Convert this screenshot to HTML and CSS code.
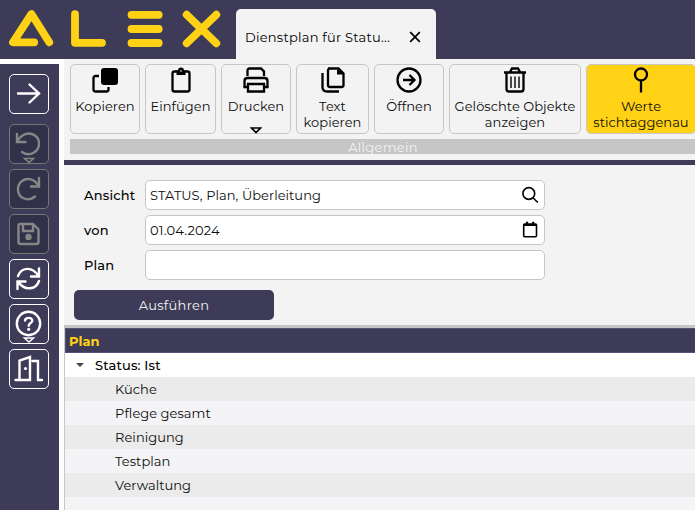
FILE: index.html
```html
<!DOCTYPE html>
<html lang="de">
<head>
    <meta charset="UTF-8">
    <meta name="viewport" content="width=device-width, initial-scale=1.0">
    <title>ALEX - Dienstplan für Status</title>
    <link rel="stylesheet" href="styles.css">
</head>
<body>

<!-- Header with logo and tab -->
<header class="header">
    <svg class="logo" width="236" height="59" viewBox="0 0 236 59" role="img" aria-label="ALEX">
        <path d="M49.2 42.3L31.5 14L13 42.3H34.2"/>
        <path d="M75 14.2V42.8H102"/>
        <path d="M131.5 14.8H158.7M131.5 29H158.7M131.5 43H158.7"/>
        <path d="M186.7 14.7L216.3 43.3M216.3 14.7L186.7 43.3"/>
    </svg>
    <div class="tab">
        <span class="tab-title">Dienstplan für Statu...</span>
        <svg class="tab-close" width="12" height="12" viewBox="0 0 12 12"><path d="M1.2 1.2L10.8 10.8M10.8 1.2L1.2 10.8"/></svg>
    </div>
</header>

<div class="layout">
    <!-- Sidebar -->
    <nav class="sidebar">
        <button class="side-btn side-btn-first" aria-label="Weiter">
            <svg class="icon" viewBox="0 0 38 38"><path d="M8 18.5H29M19.500 9.5L29 18.5L19.500 27.5"/></svg>
        </button>
        <button class="side-btn disabled" aria-label="Rückgängig">
            <svg class="icon" viewBox="0 0 38 38"><path d="M7 9V17H15.5M7.5 16.5C11 9 19 6.5 25 10.5C31 15 30 24 24 27.5C20 30 15.5 29.5 12 27"/><path class="thin" d="M14.5 33.5H23.5L19 37.5Z"/></svg>
        </button>
        <button class="side-btn disabled" aria-label="Wiederholen">
            <svg class="icon" viewBox="0 0 38 38"><path d="M29 8V16.5H21M28.5 16C25 9 17 7 12 11C6 15.5 7 25 13 28C17 30 21.500 29.500 25 26.500"/></svg>
        </button>
        <button class="side-btn disabled" aria-label="Speichern">
            <svg class="icon" viewBox="0 0 38 38"><path d="M10 9H23L28.500 14.500V27Q28.500 29 26.500 29H10.500Q8.500 29 8.500 27V10.500Q8.500 9 10 9ZM13 9V16H23V9"/><circle class="solid" cx="18.500" cy="22" r="3.200"/></svg>
        </button>
        <button class="side-btn" aria-label="Aktualisieren">
            <svg class="icon" viewBox="0 0 38 38"><path d="M8 16C11 7.500 22 5.500 28.500 16M29 8.500V16.500H21M29 21C26 30 14.500 31 8.500 22M7.500 29V21.500H15.500"/></svg>
        </button>
        <button class="side-btn" aria-label="Hilfe">
            <svg class="icon" viewBox="0 0 38 38"><circle cx="18.500" cy="18.500" r="11.700"/><path d="M15 15.500C15.500 11.800 22.500 12 22.300 15.800C22.200 18 18.700 18.200 18.700 20.700"/><circle class="solid" cx="18.700" cy="24.300" r="1.600"/><path class="thin" d="M14.500 33H23.500L19 37Z"/></svg>
        </button>
        <button class="side-btn" aria-label="Beenden">
            <svg class="icon" viewBox="0 0 38 38"><path d="M5.500 30H9.500V10.500L20 7V30H9.500M22.500 11H28V30H32"/><circle class="solid" cx="15.500" cy="18.500" r="1.600"/></svg>
        </button>
    </nav>

    <main class="main">
        <!-- Toolbar -->
        <section class="toolbar">
            <div class="toolbar-buttons">
                <button class="tool-btn tool-copy">
                    <svg class="icon" viewBox="0 0 26 26"><path d="M7 9H3.500Q1.500 9 1.500 11V22.500Q1.500 24.500 3.500 24.500H14.500Q16.500 24.500 16.500 22.500V20"/><rect class="solid" x="9" y="1" width="17" height="17" rx="3"/></svg>
                    <span>Kopieren</span>
                </button>
                <button class="tool-btn tool-paste">
                    <svg class="icon" viewBox="0 0 26 26"><rect x="4.500" y="4.500" width="17" height="20" rx="2"/><path class="solid" d="M8.500 3.500H10A3 3 0 0 1 16 3.500H17.500V8H8.500Z"/><circle cx="13" cy="4" r=".8" fill="#fff" stroke="none"/></svg>
                    <span>Einfügen</span>
                </button>
                <button class="tool-btn tool-print">
                    <svg class="icon" viewBox="0 0 26 26"><path d="M4.500 9V3.500Q4.500 1.500 6.500 1.500H18L21 4.500V9M5 20H1.500V14Q1.500 11 4.500 11H21.500Q24.500 11 24.500 14V20H21M5 17H21V24.500H5Z"/></svg>
                    <span>Drucken</span>
                    <svg class="drop" width="12" height="7" viewBox="0 0 12 7"><path d="M1.500 1H10.500L6 5.500Z"/></svg>
                </button>
                <button class="tool-btn tool-text">
                    <svg class="icon" viewBox="0 0 26 26"><path d="M8 1.500H18.500L23.500 6.500V18Q23.500 20 21.500 20H10Q8 20 8 18V3.500Q8 1.500 10 1.500"/><path d="M2.500 6V20Q2.500 24.500 7 24.500H19"/><path class="solid" d="M17 1V7.500H24Z"/></svg>
                    <span>Text<br>kopieren</span>
                </button>
                <button class="tool-btn tool-open">
                    <svg class="icon" viewBox="0 0 26 26"><circle cx="13" cy="13" r="11.500"/><path d="M7 13H18.500M13.500 8L18.500 13L13.500 18"/></svg>
                    <span>Öffnen</span>
                </button>
                <button class="tool-btn tool-deleted">
                    <svg class="icon" viewBox="0 0 26 26"><path d="M2 5.500H24M8 5L10 1.500H16L18 5M4.500 6V22Q4.500 24.500 7 24.500H19Q21.500 24.500 21.500 22V6"/><path class="line" d="M9 9.500V21M13 9.500V21M17 9.500V21"/></svg>
                    <span>Gelöschte Objekte<br>anzeigen</span>
                </button>
                <button class="tool-btn tool-values active">
                    <svg class="icon" viewBox="0 0 26 26"><circle cx="13" cy="7.500" r="6"/><path d="M13 13.500V25.500"/></svg>
                    <span>Werte<br>stichtaggenau</span>
                </button>
            </div>
            <div class="toolbar-group">Allgemein</div>
        </section>

        <!-- Filter form -->
        <section class="filter">
            <div class="form-row">
                <label>Ansicht</label>
                <div class="field">
                    <span>STATUS, Plan, Überleitung</span>
                    <svg class="field-icon" width="18" height="18" viewBox="0 0 18 18"><circle cx="7.800" cy="7.500" r="5.900"/><path d="M12 11.700L16.800 16.500"/></svg>
                </div>
            </div>
            <div class="form-row">
                <label>von</label>
                <div class="field">
                    <span class="value-date">01.04.2024</span>
                    <svg class="field-icon" width="18" height="18" viewBox="0 0 18 18"><rect x="2.700" y="3" width="12.800" height="12.700" rx="1"/><path d="M2.200 4H16M6 .800V4M12.200 .800V4" stroke-width="2.200"/></svg>
                </div>
            </div>
            <div class="form-row">
                <label>Plan</label>
                <div class="field"></div>
            </div>
            <button class="run-btn">Ausführen</button>
        </section>

        <!-- Result tree -->
        <section class="tree">
            <div class="tree-header">Plan</div>
            <div class="tree-row tree-group"><i class="caret"></i><span>Status: Ist</span></div>
            <div class="tree-row odd">Küche</div>
            <div class="tree-row">Pflege gesamt</div>
            <div class="tree-row odd">Reinigung</div>
            <div class="tree-row">Testplan</div>
            <div class="tree-row odd">Verwaltung</div>
            <div class="tree-row"></div>
        </section>
    </main>
</div>

</body>
</html>
```

FILE: styles.css
```css
* {
    box-sizing: border-box;
}
body {
    margin: 0;
    height: 510px;
    overflow: hidden;
    background: #fff;
    color: #0c0c0c;
    font-family: Montserrat, Inter, sans-serif;
    font-size: 13px;
    line-height: 16px;
    letter-spacing: 0.05px;
}
button {
    font: inherit;
    color: inherit;
    letter-spacing: inherit;
    padding: 0;
    margin: 0;
}
svg {
    display: block;
    fill: none;
    stroke: currentColor;
    flex-shrink: 0;
}
svg .solid {
    fill: currentColor;
    stroke: none;
}
/* Header */
.header {
    display: flex;
    align-items: flex-end;
    height: 59px;
    background: #3d3b58;
}
.logo {
    stroke: #ffd215;
    stroke-width: 7.8;
    stroke-linecap: round;
    stroke-linejoin: round;
}
.tab {
    display: flex;
    align-items: center;
    justify-content: space-between;
    width: 200px;
    height: 50px;
    padding: 6px 15px 0 9px;
    border-radius: 5px 5px 0 0;
    background: #f3f3f3;
    color: #000;
}
.tab-title {
    letter-spacing: 0.24px;
    white-space: nowrap;
}
.tab-close {
    stroke-width: 1.7;
}
.layout {
    display: flex;
    height: 451px;
}
/* Sidebar */
.sidebar {
    display: flex;
    flex-direction: column;
    align-items: center;
    gap: 5px;
    width: 59px;
    margin: 5px 5px 0 0;
    padding: 10px 1px 0 0;
    background: #3d3b58;
    flex-shrink: 0;
}
.side-btn {
    width: 40px;
    height: 40px;
    border: 1px solid #fff;
    border-radius: 5px;
    background: none;
    color: #fff;
    flex-shrink: 0;
}
.side-btn-first {
    margin-bottom: 5px;
}
.side-btn.disabled {
    border-color: #777775;
    background: #32314a;
    color: #868684;
}
.side-btn .icon {
    width: 38px;
    height: 38px;
    stroke-width: 2.4;
    stroke-linecap: round;
}
.side-btn .thin {
    stroke-width: 1.5;
}
/* Toolbar */
.main {
    flex: 1;
    min-width: 0;
    background: #f3f3f3;
}
.toolbar {
    height: 106px;
    padding: 5px 0 0 6px;
    border-bottom: 5px solid #3d3b58;
    overflow: hidden;
}
.toolbar-buttons {
    display: flex;
    gap: 5px;
}
.tool-btn {
    display: flex;
    flex-direction: column;
    align-items: center;
    width: 70px;
    height: 70px;
    padding-top: 2px;
    border: 1px solid #c6c6c6;
    border-radius: 5px;
    background: none;
    text-align: center;
    white-space: nowrap;
    flex-shrink: 0;
}
.tool-btn .icon {
    width: 26px;
    height: 26px;
    margin-bottom: 5px;
    color: #000;
    stroke-width: 2.3;
}
.tool-btn .line {
    stroke-width: 1.4;
}
.tool-btn .drop {
    margin-top: 13px;
    color: #000;
    stroke-width: 1.6;
}
.tool-btn.active {
    background: #ffd215;
}
.tool-paste {
    width: 71px;
}
.tool-text {
    width: 73px;
}
.tool-deleted {
    width: 132px;
}
.tool-values {
    width: 110px;
}
.toolbar-group {
    height: 15px;
    margin-top: 5px;
    padding-left: 1px;
    background: #c6c6c6;
    color: #f3f3f3;
    text-align: center;
    line-height: 17px;
    letter-spacing: 0.3px;
}
/* Filter form */
.filter {
    display: flex;
    flex-direction: column;
    gap: 5px;
    height: 160px;
    padding: 15px 0 0 10px;
}
.form-row {
    display: flex;
    align-items: center;
    height: 30px;
}
.form-row label {
    width: 71px;
    padding-left: 10px;
    color: #000;
    font-weight: 500;
    letter-spacing: 0.18px;
}
.field {
    display: flex;
    align-items: center;
    justify-content: space-between;
    width: 400px;
    height: 30px;
    padding: 0 5px 0 4px;
    border: 1px solid #c6c6c6;
    border-radius: 5px;
    background: #fff;
}
.value-date {
    letter-spacing: 0.2px;
}
.field-icon {
    color: #000;
    stroke-width: 1.6;
}
.run-btn {
    width: 200px;
    height: 30px;
    margin-top: 5px;
    border: 0;
    border-radius: 5px;
    background: #3d3b58;
    color: #f3f3f3;
    letter-spacing: 0.3px;
}
/* Result tree */
.tree {
    height: 185px;
    border-top: 3px solid #c6c6c6;
    border-left: 1px solid #c6c6c6;
    overflow: hidden;
}
.tree-header {
    height: 25px;
    padding-left: 3px;
    border: 1px solid #565176;
    border-right: 0;
    background: #3d3b58;
    color: #ffd215;
    font-weight: 700;
    line-height: 25px;
}
.tree-row {
    height: 24px;
    padding-left: 50px;
    background: #f4f4f6;
    line-height: 24px;
}
.tree-row.odd {
    background: #ebebeb;
}
.tree-group {
    display: flex;
    align-items: center;
    gap: 11px;
    padding-left: 11px;
    background: #fff;
    color: #000;
    font-weight: 500;
    letter-spacing: 0.15px;
}
.caret {
    border: 4px solid transparent;
    border-top-color: #444;
    border-bottom: 0;
}
```
